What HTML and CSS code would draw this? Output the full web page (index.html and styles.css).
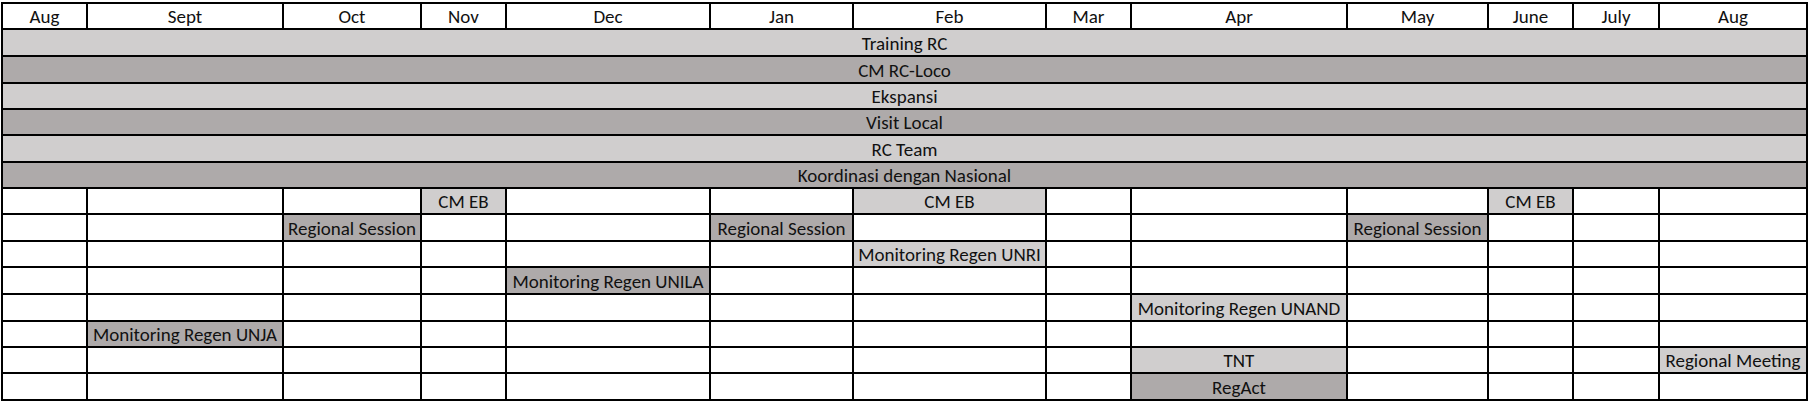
FILE: index.html
```html
<!DOCTYPE html>
<html lang="id">
<head>
<meta charset="utf-8">
<title>Timeline</title>
<link rel="stylesheet" href="styles.css">
</head>
<body>
<div class="sheet">
  <div class="c">Aug</div><div class="c">Sept</div><div class="c">Oct</div><div class="c">Nov</div><div class="c">Dec</div><div class="c">Jan</div><div class="c">Feb</div><div class="c">Mar</div><div class="c">Apr</div><div class="c">May</div><div class="c">June</div><div class="c">July</div><div class="c">Aug</div>

  <div class="c full light">Training RC</div>
  <div class="c full dark">CM RC-Loco</div>
  <div class="c full light">Ekspansi</div>
  <div class="c full dark">Visit Local</div>
  <div class="c full light">RC Team</div>
  <div class="c full dark">Koordinasi dengan Nasional</div>

  <div class="c"></div><div class="c"></div><div class="c"></div><div class="c light">CM EB</div><div class="c"></div><div class="c"></div><div class="c light">CM EB</div><div class="c"></div><div class="c"></div><div class="c"></div><div class="c light">CM EB</div><div class="c"></div><div class="c"></div>

  <div class="c"></div><div class="c"></div><div class="c dark">Regional Session</div><div class="c"></div><div class="c"></div><div class="c dark">Regional Session</div><div class="c"></div><div class="c"></div><div class="c"></div><div class="c dark">Regional Session</div><div class="c"></div><div class="c"></div><div class="c"></div>

  <div class="c"></div><div class="c"></div><div class="c"></div><div class="c"></div><div class="c"></div><div class="c"></div><div class="c light">Monitoring Regen UNRI</div><div class="c"></div><div class="c"></div><div class="c"></div><div class="c"></div><div class="c"></div><div class="c"></div>

  <div class="c"></div><div class="c"></div><div class="c"></div><div class="c"></div><div class="c dark">Monitoring Regen UNILA</div><div class="c"></div><div class="c"></div><div class="c"></div><div class="c"></div><div class="c"></div><div class="c"></div><div class="c"></div><div class="c"></div>

  <div class="c"></div><div class="c"></div><div class="c"></div><div class="c"></div><div class="c"></div><div class="c"></div><div class="c"></div><div class="c"></div><div class="c light">Monitoring Regen UNAND</div><div class="c"></div><div class="c"></div><div class="c"></div><div class="c"></div>

  <div class="c"></div><div class="c dark">Monitoring Regen UNJA</div><div class="c"></div><div class="c"></div><div class="c"></div><div class="c"></div><div class="c"></div><div class="c"></div><div class="c"></div><div class="c"></div><div class="c"></div><div class="c"></div><div class="c"></div>

  <div class="c"></div><div class="c"></div><div class="c"></div><div class="c"></div><div class="c"></div><div class="c"></div><div class="c"></div><div class="c"></div><div class="c light">TNT</div><div class="c"></div><div class="c"></div><div class="c"></div><div class="c light">Regional Meeting</div>

  <div class="c"></div><div class="c"></div><div class="c"></div><div class="c"></div><div class="c"></div><div class="c"></div><div class="c"></div><div class="c"></div><div class="c dark">RegAct</div><div class="c"></div><div class="c"></div><div class="c"></div><div class="c"></div>
</div>
</body>
</html>
```
FILE: styles.css
```css
html, body {
  margin: 0;
  padding: 0;
  background: #ffffff;
}
body {
  padding: 2px 0 0 1px;
  font-family: Carlito, Calibri, Lato, "Liberation Sans", sans-serif;
  font-size: 19px;
  color: #111;
}
.sheet {
  display: grid;
  width: max-content;
  grid-template-columns: 83px 194px 136px 83px 202px 141px 191px 83px 214px 139px 83px 84px 146px;
  grid-template-rows: 24px 25px 25px 24px 24px 25px 24px 24px 25px 24px 25px 25px 24px 24px 25px;
  gap: 2px;
  padding: 2px;
  background: #000;
}
.c {
  background: #fff;
  display: flex;
  align-items: center;
  justify-content: center;
  white-space: nowrap;
  overflow: hidden;
  line-height: 1;
  padding-top: 1px;
}
.full {
  grid-column: 1 / -1;
}
.light {
  background: #d0cece;
}
.dark {
  background: #aeaaaa;
}
```
